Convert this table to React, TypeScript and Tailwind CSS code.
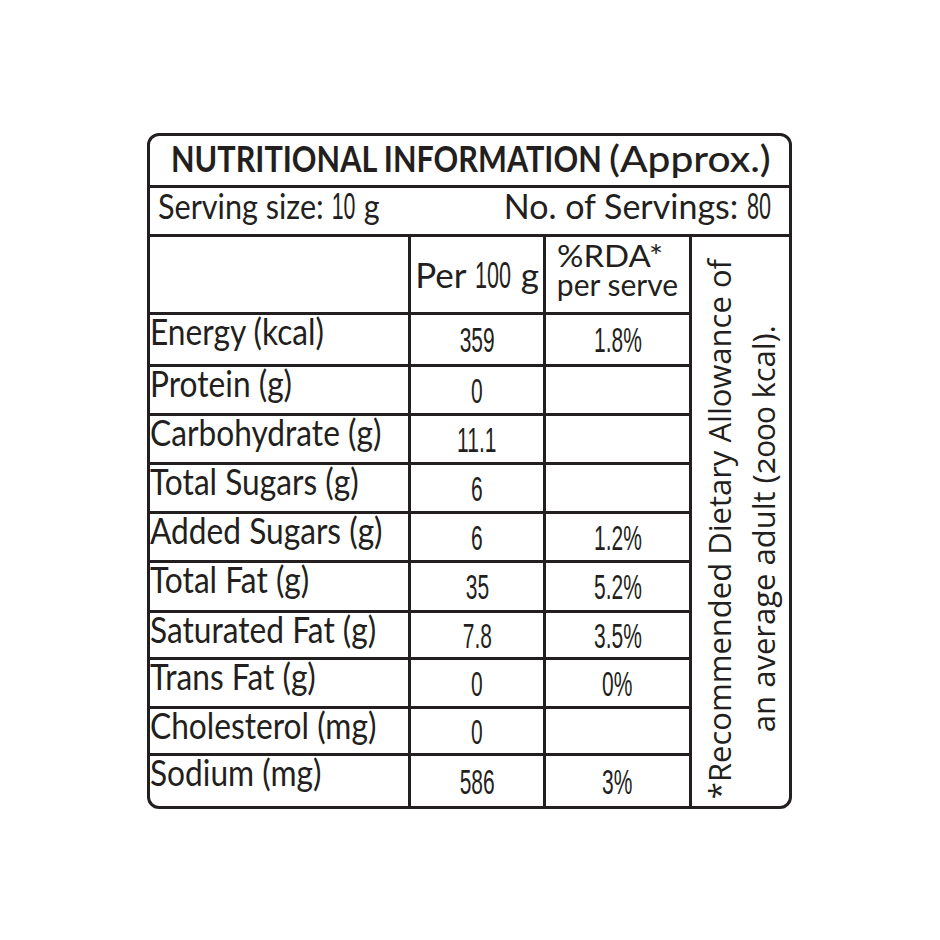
import React from "react";

const ROWS = [
  { label: "Energy (kcal)", v: "359", r: "1.8%", h: "h-[52px] border-b-[3px]" },
  { label: "Protein (g)", v: "0", r: "", h: "h-[49px] border-b-[3px]" },
  { label: "Carbohydrate (g)", v: "11.1", r: "", h: "h-[49px] border-b-[3px]" },
  { label: "Total Sugars (g)", v: "6", r: "", h: "h-[49px] border-b-[3px]" },
  { label: "Added Sugars (g)", v: "6", r: "1.2%", h: "h-[49px] border-b-[3px]" },
  { label: "Total Fat (g)", v: "35", r: "5.2%", h: "h-[50px] border-b-[3px]" },
  { label: "Saturated Fat (g)", v: "7.8", r: "3.5%", h: "h-[47px] border-b-[3px]" },
  { label: "Trans Fat (g)", v: "0", r: "0%", h: "h-[49px] border-b-[3px]" },
  { label: "Cholesterol (mg)", v: "0", r: "", h: "h-[47px] border-b-[3px]" },
  { label: "Sodium (mg)", v: "586", r: "3%", h: "h-[50px]" },
];

const NUM =
  "inline-block whitespace-nowrap scale-x-[0.6] font-['Liberation_Sans',sans-serif] text-[35px] leading-[35px]";

function InlineNum({ children, w, s }: { children: React.ReactNode; w: string; s: string }) {
  return (
    <span className={`inline-block ${w}`}>
      <span
        className={`inline-block whitespace-nowrap origin-left ${s} font-['Liberation_Sans',sans-serif] text-[36px]`}
      >
        {children}
      </span>
    </span>
  );
}

export default function App() {
  return (
    <div className="w-[940px] h-[940px] bg-white pt-[133px] pl-[147px] text-[#231f20]">
      <div className="w-[645px] border-[3px] border-[#231f20] rounded-[12px] overflow-hidden bg-white">
        {/* Title */}
        <div className="h-[52px] border-b-[3px] border-[#231f20] flex items-start pt-[4px] pl-[21px] font-['Lato',sans-serif] text-[36px] leading-[36px] whitespace-nowrap">
          <span className="inline-block w-[438px]">
            <span className="inline-block origin-left scale-x-[0.85] font-bold">NUTRITIONAL INFORMATION</span>
          </span>
          <span className="inline-block origin-left scale-x-[1.13] font-medium">(Approx.)</span>
        </div>

        {/* Serving */}
        <div className="h-[49px] border-b-[3px] border-[#231f20] flex items-start justify-between pt-[1px] pl-[8px] pr-[18px] font-['Lato',sans-serif] text-[34px] leading-[34px] whitespace-nowrap">
          <span className="inline-block origin-left scale-x-[0.9]">
            Serving size: <InlineNum w="w-[27px]" s="scale-x-[0.66]">10</InlineNum> g
          </span>
          <span className="inline-block">
            No. of Servings: <InlineNum w="w-[24px]" s="scale-x-[0.6]">80</InlineNum>
          </span>
        </div>

        {/* Body */}
        <div className="flex">
          <div className="w-[542px] flex flex-col">
            {/* Header */}
            <div className="flex h-[78px] border-b-[3px] border-[#231f20]">
              <div className="w-[261px] border-r-[3px] border-[#231f20]" />
              <div className="w-[135px] border-r-[3px] border-[#231f20] flex items-center justify-center font-['Lato',sans-serif] text-[35px] leading-[35px] whitespace-nowrap">
                <span>
                  Per <InlineNum w="w-[37px]" s="scale-x-[0.6]">100</InlineNum> g
                </span>
              </div>
              <div className="w-[146px] border-r-[3px] border-[#231f20] flex items-start justify-center pt-[4px] font-['Lato',sans-serif] text-[30px] leading-[29px] whitespace-nowrap">
                <div className="text-left">
                  <div className="origin-left scale-x-[1.1]">%RDA*</div>
                  <div>per serve</div>
                </div>
              </div>
            </div>

            {ROWS.map((row) => (
              <div key={row.label} className={`flex ${row.h} border-[#231f20]`}>
                <div className="w-[261px] border-r-[3px] border-[#231f20] pt-[2px] overflow-visible">
                  <span className="inline-block origin-left scale-x-[0.88] whitespace-nowrap font-['Lato',sans-serif] text-[36px] leading-[28px]">
                    {row.label}
                  </span>
                </div>
                <div className="w-[135px] border-r-[3px] border-[#231f20] flex items-center justify-center">
                  <span className={NUM}>{row.v}</span>
                </div>
                <div className="w-[146px] border-r-[3px] border-[#231f20] flex items-center justify-center">
                  <span className={NUM}>{row.r}</span>
                </div>
              </div>
            ))}
          </div>

          {/* Vertical note */}
          <div className="w-[97px] flex items-center justify-center pt-[15px]">
            <div className="[writing-mode:vertical-rl] rotate-180 text-center whitespace-nowrap font-['Open_Sans',sans-serif] text-[31px] leading-[44px]">
              *Recommended Dietary Allowance of
              <br />
              an average adult (<span className="oldstyle-nums">2000</span> kcal).
            </div>
          </div>
        </div>
      </div>
    </div>
  );
}
